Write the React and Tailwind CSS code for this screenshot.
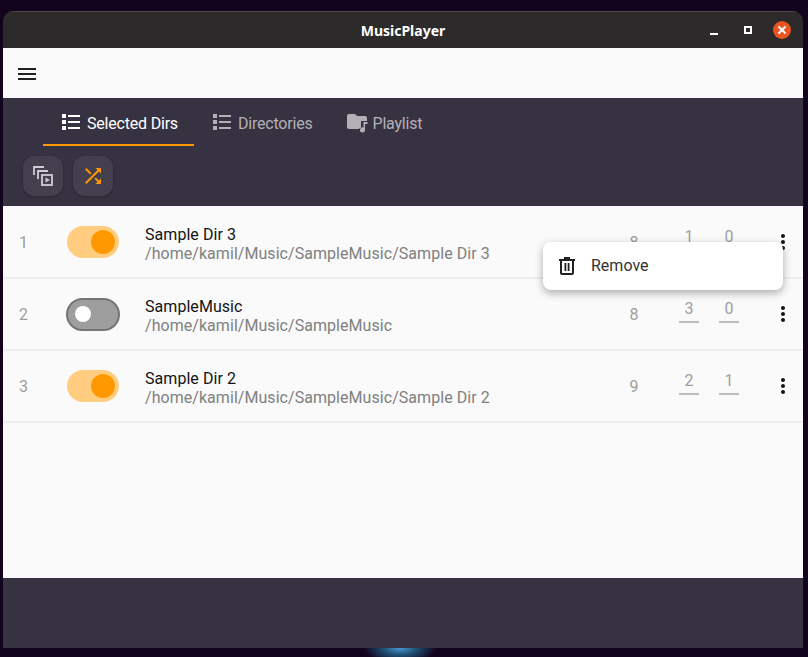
import React from "react";

const rows = [
  { n: 1, on: true, title: "Sample Dir 3", path: "/home/kamil/Music/SampleMusic/Sample Dir 3", count: 8, a: 1, b: 0 },
  { n: 2, on: false, title: "SampleMusic", path: "/home/kamil/Music/SampleMusic", count: 8, a: 3, b: 0 },
  { n: 3, on: true, title: "Sample Dir 2", path: "/home/kamil/Music/SampleMusic/Sample Dir 2", count: 9, a: 2, b: 1 },
];

const ListIcon = () => (
  <svg width="24" height="24" viewBox="0 0 24 24" fill="currentColor">
    <path d="M3 3h4v4H3zM3 9h4v4H3zM3 15h4v4H3zM9 4h12v2H9zM9 10h12v2H9zM9 16h12v2H9z" />
  </svg>
);

const FolderMusicIcon = () => (
  <svg width="24" height="24" viewBox="0 0 24 24" fill="currentColor">
    <path d="M4 3h6l2 2h8a2 2 0 0 1 2 2v3h-6v6.5l-2.5 1.5H4a2 2 0 0 1-2-2V5a2 2 0 0 1 2-2z" />
    <path d="M18.5 11H22.5v2h-2.5v6a2.5 2.5 0 1 1-1.5-2.3z" />
  </svg>
);

const Tab = ({ icon, label, active }) => (
  <div
    className={`flex h-[48px] items-center gap-1 border-b-2 px-4 pt-[4px] ${
      active ? "border-[#ff9800] text-white" : "border-transparent text-[#b3b0b8]"
    }`}
  >
    {icon}
    <span className="pt-[2px] text-[16px] leading-5 tracking-[-0.2px]">{label}</span>
  </div>
);

const Toggle = ({ on }) =>
  on ? (
    <div className="flex h-[32px] w-[52px] items-center justify-end rounded-full bg-[#ffcc80] pr-1">
      <div className="h-[24px] w-[24px] rounded-full bg-[#ff9800]" />
    </div>
  ) : (
    <div className="-mx-px flex h-[33px] w-[54px] items-center rounded-full border-2 border-[#757575] bg-[#9e9e9e] pl-[7px]">
      <div className="h-[16px] w-[16px] rounded-full bg-white" />
    </div>
  );

const NumberField = ({ value }) => (
  <div className="flex h-[32px] w-[20px] flex-col items-center pt-px text-[16px] leading-5 text-[#9e9e9e]">
    <span>{value}</span>
    <div className="mt-[2px] h-[2px] w-full bg-[#bdbdbd]" />
  </div>
);

const Row = ({ row }) => (
  <div className="flex h-[72px] items-center border-b-2 border-[#eeeeee] pl-[16px]">
    <span className="w-[48px] pt-[2px] text-[16px] text-[#9e9e9e]">{row.n}</span>
    <Toggle on={row.on} />
    <div className="ml-[26px] flex flex-1 flex-col pt-[4px] text-[16px] leading-[19px] tracking-[0.05px]">
      <span className="text-[#141414]">{row.title}</span>
      <span className="text-[#808080]">{row.path}</span>
    </div>
    <span className="mr-[35px] w-[20px] pt-[2px] text-center text-[16px] text-[#9e9e9e]">{row.count}</span>
    <div className="flex gap-5">
      <NumberField value={row.a} />
      <NumberField value={row.b} />
    </div>
    <div className="ml-6 flex w-[40px] justify-center text-[#141414]">
      <svg width="24" height="24" viewBox="0 0 24 24" fill="currentColor">
        <path d="M12 8c1.1 0 2-.9 2-2s-.9-2-2-2-2 .9-2 2 .9 2 2 2zm0 2c-1.1 0-2 .9-2 2s.9 2 2 2 2-.9 2-2-.9-2-2-2zm0 6c-1.1 0-2 .9-2 2s.9 2 2 2 2-.9 2-2-.9-2-2-2z" />
      </svg>
    </div>
  </div>
);

export default function App() {
  return (
    <div className="flex h-[657px] w-[808px] flex-col overflow-hidden bg-[#12041c] pt-[11px] font-['Roboto',sans-serif]">
      <div className="ml-[3px] flex h-[637px] w-[800px] flex-col overflow-hidden rounded-t-[10px]">
        {/* title bar */}
        <div className="grid h-[37px] grid-cols-[1fr_auto_1fr] items-center border-t border-[#4a4646] bg-[#2c2a2a] text-white">
          <div />
          <span className="font-['Noto_Sans',sans-serif] text-[14px] font-bold">MusicPlayer</span>
          <div className="flex items-center justify-end pr-[12px]">
            <div className="mt-[7px] h-[2px] w-[8px] bg-white" />
            <div className="ml-[26px] h-[8px] w-[8px] border-2 border-white" />
            <div className="ml-[21px] flex h-[18px] w-[18px] items-center justify-center rounded-full bg-[#e95420]">
              <svg width="10" height="10" viewBox="0 0 10 10" stroke="white" strokeWidth="2">
                <path d="M1.5 1.5l7 7M8.5 1.5l-7 7" />
              </svg>
            </div>
          </div>
        </div>

        {/* app bar */}
        <div className="flex h-[50px] items-center bg-[#fafafa] pl-[15px] pt-[2px]">
          <div className="flex w-[18px] flex-col gap-[3px]">
            <div className="h-[2px] bg-[#212121]" />
            <div className="h-[2px] bg-[#212121]" />
            <div className="h-[2px] bg-[#212121]" />
          </div>
        </div>

        {/* tabs and actions */}
        <div className="flex h-[108px] flex-col bg-[#373241]">
          <div className="flex pl-[40px]">
            <Tab icon={<ListIcon />} label="Selected Dirs" active />
            <Tab icon={<ListIcon />} label="Directories" />
            <Tab icon={<FolderMusicIcon />} label="Playlist" />
          </div>
          <div className="mt-[10px] flex gap-[10px] pl-[20px]">
            <button className="flex h-[40px] w-[40px] items-center justify-center rounded-[12px] bg-[#443f4f] text-[#cfcdd3] shadow-[0_1px_3px_rgba(0,0,0,0.25)]">
              <svg width="24" height="24" viewBox="0 0 24 24" fill="none" stroke="currentColor" strokeWidth="1.8">
                <path d="M3 11V3h10M7 15V7h10" />
                <rect x="11" y="11" width="10" height="10" />
                <path d="M14.5 13.5l4.5 2.5-4.5 2.5z" fill="currentColor" stroke="none" />
              </svg>
            </button>
            <button className="flex h-[40px] w-[40px] items-center justify-center rounded-[12px] bg-[#443f4f] text-[#ff9800] shadow-[0_1px_3px_rgba(0,0,0,0.25)]">
              <svg width="24" height="24" viewBox="0 0 24 24" fill="currentColor">
                <path d="M10.59 9.17L5.41 4 4 5.41l5.17 5.17 1.42-1.41zM14.5 4l2.04 2.04L4 18.59 5.41 20 17.96 7.46 20 9.5V4h-5.5zm.33 9.41l-1.41 1.41 3.13 3.13L14.5 20H20v-5.5l-2.04 2.04-3.13-3.13z" />
              </svg>
            </button>
          </div>
        </div>

        {/* directory list */}
        <div className="relative h-[372px] bg-[#fafafa] pt-px">
          {rows.map((row) => (
            <Row key={row.n} row={row} />
          ))}
          <div className="absolute left-[540px] top-[36px] flex h-[48px] w-[240px] items-center gap-[12px] rounded-[8px] bg-white pl-[12px] text-[16px] text-[#333333] shadow-[0_3px_9px_rgba(0,0,0,0.32)]">
            <svg width="24" height="24" viewBox="0 0 24 24" fill="#212121">
              <path d="M9 3h6v2h5v2h-1v12a2 2 0 0 1-2 2H7a2 2 0 0 1-2-2V7H4V5h5zM7 7v12h10V7zM9.5 9h1.8v8H9.5zM12.7 9h1.8v8h-1.8z" fillRule="evenodd" />
            </svg>
            <span>Remove</span>
          </div>
        </div>

        {/* player bar */}
        <div className="flex-1 bg-[#373241]" />
      </div>

      <div className="flex flex-1 justify-center pr-2">
        <div className="h-full w-[90px] bg-[radial-gradient(ellipse_36px_16px_at_50%_0%,#4a9ad6_0%,#1f5075_45%,transparent_100%)]" />
      </div>
    </div>
  );
}
